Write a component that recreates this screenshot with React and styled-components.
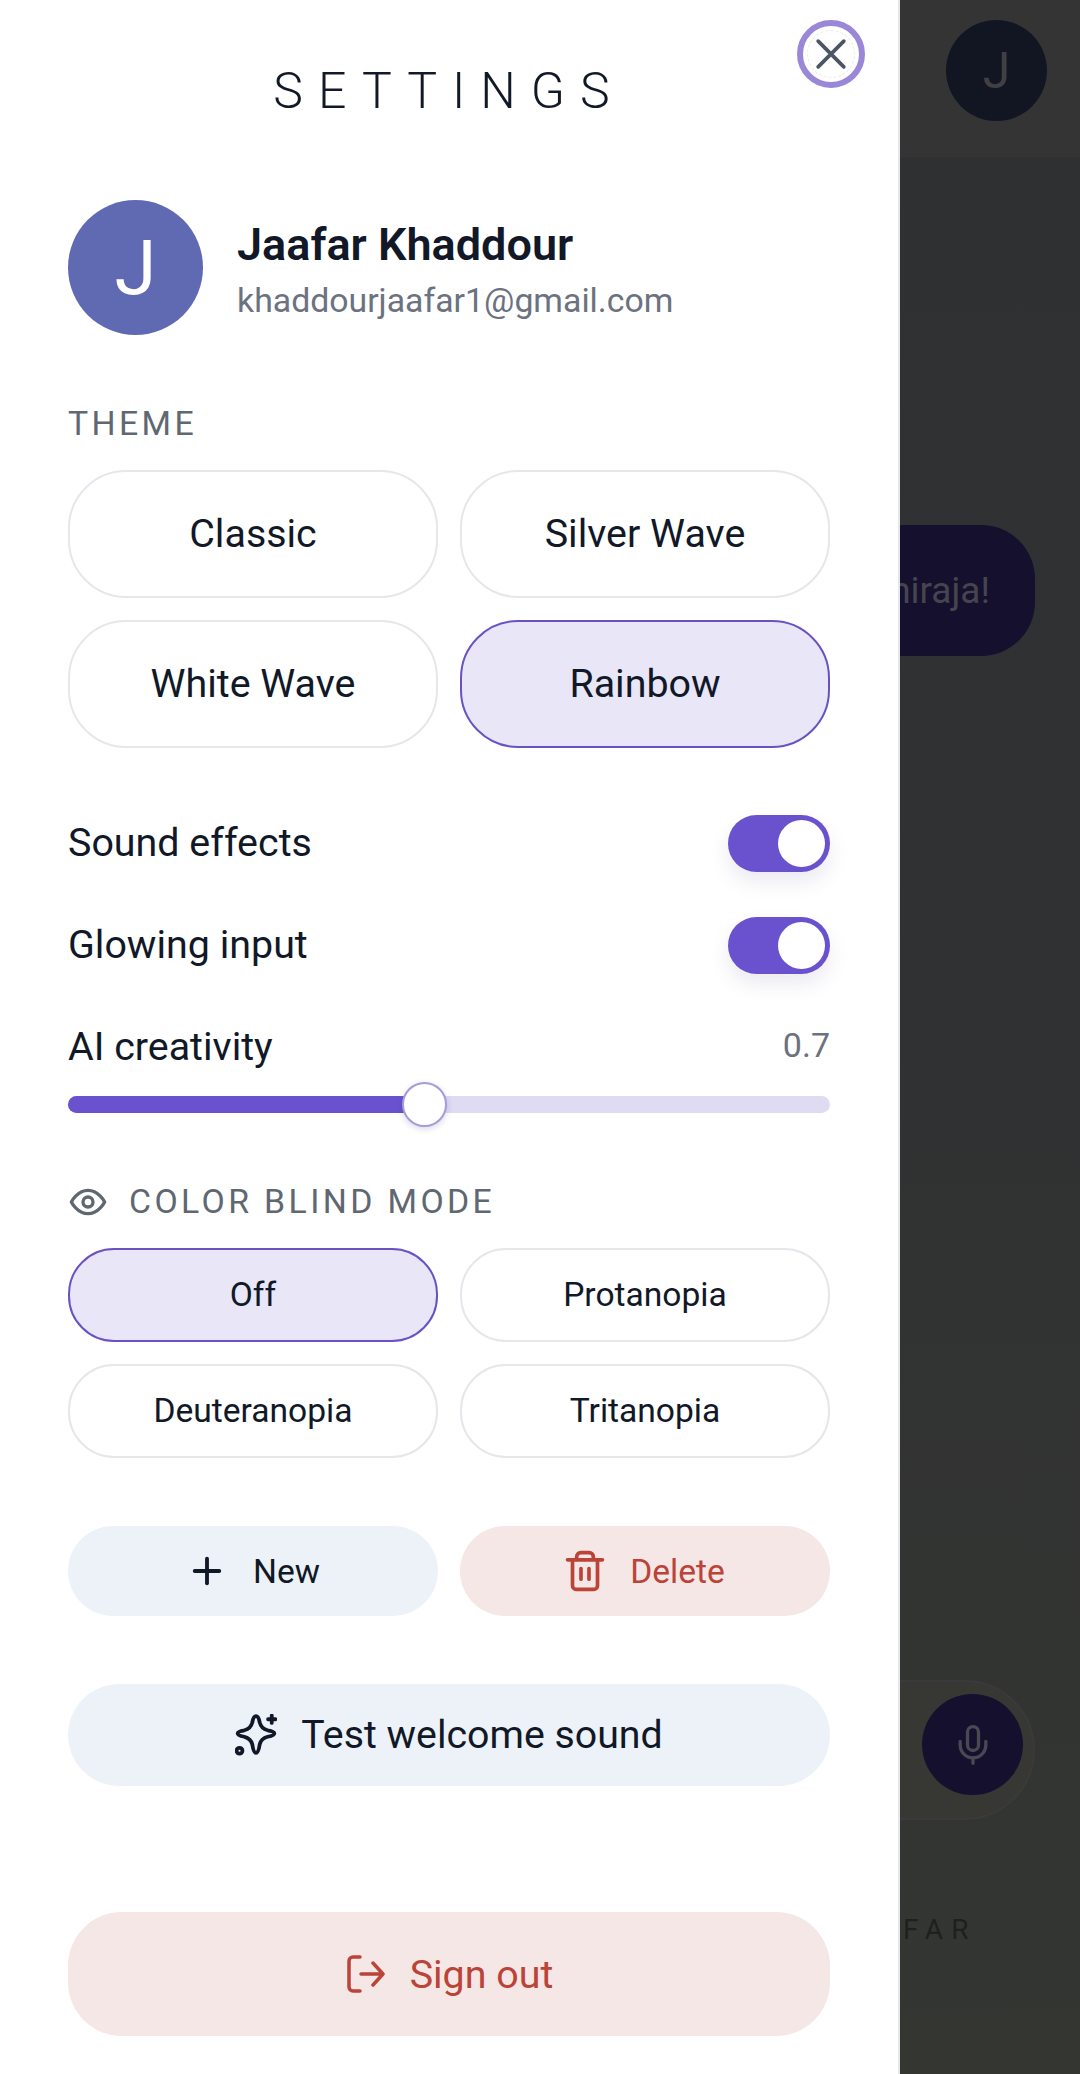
import React from 'react'
import styled, { createGlobalStyle } from 'styled-components'
import { Plus, Mic } from 'lucide-react'

const themes = [
  { label: 'Classic' },
  { label: 'Silver Wave' },
  { label: 'White Wave' },
  { label: 'Rainbow', active: true }
]

const blindModes = [
  { label: 'Off', active: true },
  { label: 'Protanopia' },
  { label: 'Deuteranopia' },
  { label: 'Tritanopia' }
]

const App = () => (
  <>
    <GlobalStyle />
    <Page>
      <Backdrop>
        <TopBar>
          <TopAvatar>J</TopAvatar>
        </TopBar>
        <Chat>
          <Bubble>Hello, Shiraja!</Bubble>
        </Chat>
        <InputBar>
          <MicButton>
            <Mic size={44} strokeWidth={1.8} />
          </MicButton>
        </InputBar>
        <Footer>JAAFAR</Footer>
      </Backdrop>

      <Drawer>
        <CloseButton aria-label="Close">
          <svg width="44" height="44" viewBox="0 0 24 24" fill="none" stroke="currentColor" strokeWidth="2" strokeLinecap="round">
            <path d="M5 5l14 14M19 5L5 19" />
          </svg>
        </CloseButton>
        <Title>SETTINGS</Title>

        <Profile>
          <Avatar>J</Avatar>
          <div>
            <Name>Jaafar Khaddour</Name>
            <Email>khaddourjaafar1@gmail.com</Email>
          </div>
        </Profile>

        <SectionLabel>THEME</SectionLabel>
        <ThemeGrid>
          {themes.map(t => (
            <ThemeButton key={t.label} $active={t.active}>
              {t.label}
            </ThemeButton>
          ))}
        </ThemeGrid>

        <Row>
          <RowLabel>Sound effects</RowLabel>
          <Toggle />
        </Row>
        <Row>
          <RowLabel>Glowing input</RowLabel>
          <Toggle />
        </Row>
        <Row>
          <RowLabel>AI creativity</RowLabel>
          <Value>0.7</Value>
        </Row>
        <Slider>
          <SliderFill style={{ width: `${(356 / 762) * 100}%` }} />
          <Thumb />
        </Slider>

        <BlindLabel>
          <svg width="40" height="40" viewBox="0 0 24 24" fill="none" stroke="#5f6771" strokeWidth="2" strokeLinecap="round" strokeLinejoin="round">
            <path d="M2 12s3.6-7 10-7 10 7 10 7-3.6 7-10 7-10-7-10-7z" />
            <circle cx="12" cy="12" r="3" />
          </svg>
          <SectionText>COLOR BLIND MODE</SectionText>
        </BlindLabel>
        <BlindGrid>
          {blindModes.map(m => (
            <BlindButton key={m.label} $active={m.active}>
              {m.label}
            </BlindButton>
          ))}
        </BlindGrid>

        <ActionGrid>
          <ActionButton>
            <Plus size={42} strokeWidth={2.2} />
            New
          </ActionButton>
          <ActionButton $danger>
            <svg width="40" height="42" viewBox="0 0 24 24" fill="none" stroke="currentColor" strokeWidth="2.2" strokeLinecap="round" strokeLinejoin="round">
              <path d="M1.5 5.3h21M4.5 5.3v15.5a2.2 2.2 0 0 0 2.2 2.2h10.6a2.2 2.2 0 0 0 2.2-2.2V5.3M7 5.3V3.5A2.5 2.5 0 0 1 9.5 1h5A2.5 2.500 0 0 1 17 3.500v1.800M9.600 10.500v6.400M14.400 10.500v6.400" />
            </svg>
            Delete
          </ActionButton>
        </ActionGrid>

        <TestButton>
          <svg width="42" height="42" viewBox="0 0 40 40" fill="none" stroke="currentColor" strokeWidth="3.6" strokeLinecap="round" strokeLinejoin="round">
            <path d="M20 2C18 2 17 5 16.500 8C15.500 12 13 14.500 9 15.500C6 16 2.500 16.800 2.500 18.500C2.500 20.200 6 21 9 21.700C13 22.700 15.500 25 16.500 29C17 32.500 18 37 20 37C22 37 23 32.500 23.500 29C24.500 25 27 22.700 31 21.700C34 21 37.500 20.200 37.500 18.500C37.500 16.800 34 16 31 15.500C27 14.500 24.500 12 23.500 8C23 5 22 2 20 2Z" />
            <path d="M35 1.500v7M31.500 5h7" />
            <circle cx="4.300" cy="35" r="2.800" />
          </svg>
          Test welcome sound
        </TestButton>

        <SignOut>
          <svg width="38" height="38" viewBox="0 0 38 38" fill="none" stroke="currentColor" strokeWidth="3.5" strokeLinecap="round" strokeLinejoin="round">
            <path d="M13 2H6a4 4 0 0 0-4 4v26a4 4 0 0 0 4 4h7M14 19h22M26 8l10 11-10 11" />
          </svg>
          Sign out
        </SignOut>
      </Drawer>
    </Page>
  </>
)

const GlobalStyle = createGlobalStyle`
  html, body {
    margin: 0;
    padding: 0;
    background: #303132;
  }

  body {
    font-family: Roboto, "Liberation Sans", sans-serif;
    color: #111827;
  }

  * {
    box-sizing: border-box;
  }

  button {
    font-family: inherit;
    cursor: pointer;
  }
`

const Page = styled.div`
  position: relative;
  width: 1080px;
  height: 2074px;
  overflow: hidden;
`

const Backdrop = styled.div`
  display: flex;
  flex-direction: column;
  height: 100%;
  background: linear-gradient(180deg, #2f3032 0%, #303132 50%, #343632 100%);
`

const TopBar = styled.div`
  display: flex;
  justify-content: flex-end;
  align-items: flex-start;
  height: 157px;
  padding: 20px 33px 0 0;
  background: #343435;
`

const TopAvatar = styled.div`
  display: flex;
  align-items: center;
  justify-content: center;
  width: 101px;
  height: 101px;
  border-radius: 50%;
  background: #121622;
  color: #403f44;
  font-size: 50px;
`

const Chat = styled.div`
  flex: 1;
  display: flex;
  justify-content: flex-end;
  align-items: flex-start;
  padding: 368px 45px 0 0;
`

const Bubble = styled.div`
  display: flex;
  align-items: center;
  height: 131px;
  padding: 0 45px;
  border-radius: 54px;
  background: #15102e;
  color: #46454f;
  font-size: 37px;
  white-space: nowrap;
`

const InputBar = styled.div`
  display: flex;
  justify-content: flex-end;
  align-items: center;
  align-self: flex-end;
  width: 600px;
  height: 140px;
  margin: 0 45px 90px 0;
  padding: 0 10px 11px 0;
  border: 2px solid #3b393c;
  border-radius: 70px;
  background: #373834;
`

const MicButton = styled.div`
  display: flex;
  align-items: center;
  justify-content: center;
  width: 101px;
  height: 101px;
  border-radius: 50%;
  background: #15102e;
  color: #4a4852;
`

const Footer = styled.div`
  height: 164px;
  padding: 3px 103px 0 0;
  text-align: right;
  color: #1e201e;
  font-size: 28px;
  letter-spacing: 0.3em;
`

const Drawer = styled.aside`
  position: absolute;
  top: 0;
  left: 0;
  bottom: 0;
  width: 900px;
  padding: 0 68px;
  background: #fff;
  border-right: 2px solid #e4e6ea;
`

const CloseButton = styled.button`
  position: absolute;
  top: 20px;
  right: 33px;
  display: flex;
  align-items: center;
  justify-content: center;
  width: 68px;
  height: 68px;
  padding: 0;
  border: 6px solid #9b87d8;
  border-radius: 50%;
  background: #fff;
  color: #4b5563;

  &::after {
    content: '';
    position: absolute;
    inset: 4px;
    border: 1px dashed #e9eaec;
    border-radius: 50%;
  }
`

const Title = styled.h1`
  margin: 0;
  padding-top: 63px;
  height: 200px;
  text-align: center;
  font-size: 50px;
  line-height: 56px;
  font-weight: 300;
  letter-spacing: 0.3em;
  color: #111827;
`

const Profile = styled.div`
  display: flex;
  align-items: center;
  gap: 34px;
  height: 135px;
`

const Avatar = styled.div`
  display: flex;
  align-items: center;
  justify-content: center;
  width: 135px;
  height: 135px;
  border-radius: 50%;
  background: #5f6ab3;
  color: #fff;
  font-size: 76px;
  font-weight: 400;
`

const Name = styled.div`
  margin-top: 4px;
  font-size: 45px;
  line-height: 60px;
  font-weight: 600;
  color: #111827;
`

const Email = styled.div`
  margin-top: 2px;
  font-size: 33.8px;
  line-height: 48px;
  color: #6b7280;
`

const SectionText = styled.span`
  font-size: 33.8px;
  line-height: 44px;
  letter-spacing: 0.1em;
  color: #5f6771;
`

const SectionLabel = styled(SectionText)`
  display: block;
  margin-top: 67px;
`

const ThemeGrid = styled.div`
  display: grid;
  grid-template-columns: 1fr 1fr;
  gap: 22px;
  margin-top: 24px;
`

const ThemeButton = styled.button`
  height: 128px;
  padding: 0;
  border-radius: 58px;
  border: 2px solid ${p => (p.$active ? '#6a52c4' : '#e5e7eb')};
  background: ${p => (p.$active ? '#e8e6f7' : '#fff')};
  font-size: 39.4px;
  line-height: 44px;
  color: #111827;
`

const Row = styled.div`
  display: flex;
  align-items: center;
  justify-content: space-between;
  height: 58px;
  margin-top: 44px;

  ${ThemeGrid} + & {
    margin-top: 66px;
  }
`

const RowLabel = styled.span`
  margin-bottom: 1px;
  font-size: 39.4px;
  color: #111827;
`

const Value = styled.span`
  margin-bottom: 4px;
  font-size: 34px;
  color: #6b7280;
`

const Toggle = styled.div`
  position: relative;
  width: 102px;
  height: 57px;
  border-radius: 29px;
  background: #6a52cf;
  box-shadow: 0 10px 20px rgba(60, 50, 120, 0.1);

  &::after {
    content: '';
    position: absolute;
    top: 5px;
    right: 5px;
    width: 47px;
    height: 47px;
    border-radius: 50%;
    background: #fff;
  }
`

const Slider = styled.div`
  position: relative;
  height: 17px;
  margin-top: 20px;
  border-radius: 9px;
  background: #dfdbf3;
`

const SliderFill = styled.div`
  height: 100%;
  border-radius: 9px;
  background: #6a52cf;
`

const Thumb = styled.div`
  position: absolute;
  top: -14px;
  left: 334px;
  width: 45px;
  height: 45px;
  border-radius: 50%;
  border: 2px solid #a79bd9;
  background: #fff;
  box-shadow: 0 2px 6px rgba(60, 50, 120, 0.2);
`

const BlindLabel = styled.div`
  display: flex;
  align-items: center;
  gap: 21px;
  margin-top: 67px;
`

const BlindGrid = styled.div`
  display: grid;
  grid-template-columns: 1fr 1fr;
  gap: 22px;
  margin-top: 24px;
`

const BlindButton = styled(ThemeButton)`
  height: 94px;
  border-radius: 46px;
  font-size: 33.6px;
`

const ActionGrid = styled.div`
  display: grid;
  grid-template-columns: 1fr 1fr;
  gap: 22px;
  margin-top: 68px;
`

const ActionButton = styled.button`
  display: flex;
  align-items: center;
  justify-content: center;
  gap: 25px;
  height: 90px;
  padding: 0;
  border: 0;
  border-radius: 45px;
  background: ${p => (p.$danger ? '#f5e7e5' : '#edf2f8')};
  color: ${p => (p.$danger ? '#bc4338' : '#111827')};
  font-size: 33.6px;
`

const TestButton = styled(ActionButton)`
  width: 100%;
  height: 102px;
  margin-top: 68px;
  gap: 24px;
  border-radius: 51px;
  font-size: 39.3px;
`

const SignOut = styled(ActionButton).attrs({ $danger: true })`
  width: 100%;
  height: 124px;
  margin-top: 126px;
  padding-left: 2px;
  border-radius: 54px;
  font-size: 39.4px;
`

export default App
